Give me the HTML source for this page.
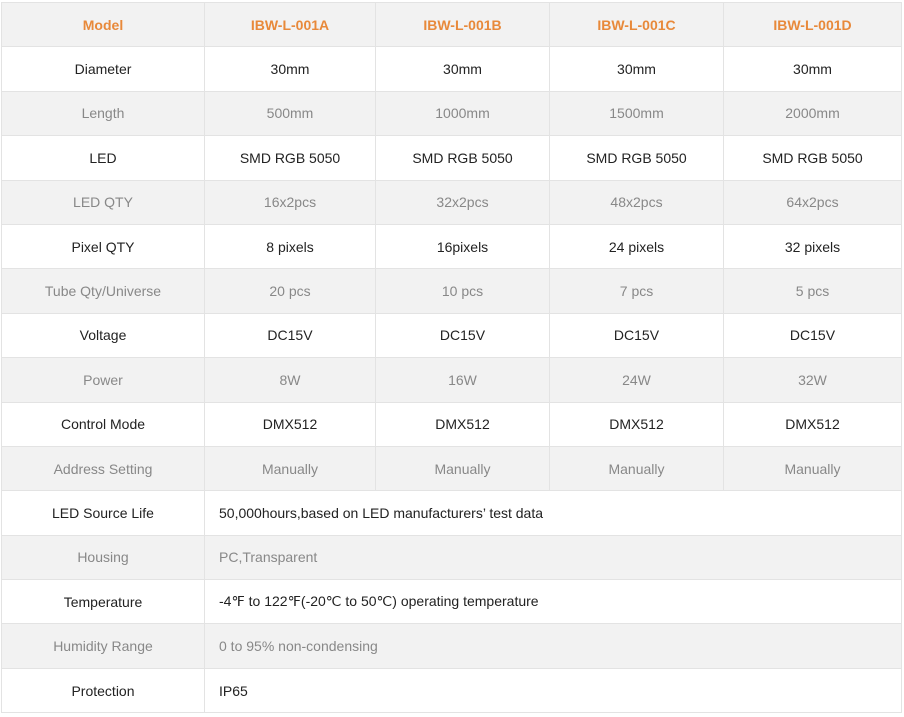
<!DOCTYPE html>
<html><head><meta charset="utf-8"><style>
html,body{margin:0;padding:0;background:#fff;width:904px;height:717px;overflow:hidden}
table{position:absolute;left:1px;top:2px;border-collapse:collapse;table-layout:fixed;width:900px;font-family:"Liberation Sans",sans-serif;font-size:14px}
td{border:1px solid #e3e3e3;text-align:center;padding:0;height:43.4px;color:#222}
tr:nth-child(odd) td{background:#f2f2f2;color:#888}
tr:first-child td{color:#e8893a;font-weight:bold}
td.l{text-align:left;padding-left:14px}
</style></head><body>
<table>
<colgroup><col style="width:203px"><col style="width:171px"><col style="width:174px"><col style="width:174px"><col style="width:178px"></colgroup>
<tr><td>Model</td><td>IBW-L-001A</td><td>IBW-L-001B</td><td>IBW-L-001C</td><td>IBW-L-001D</td></tr>
<tr><td>Diameter</td><td>30mm</td><td>30mm</td><td>30mm</td><td>30mm</td></tr>
<tr><td>Length</td><td>500mm</td><td>1000mm</td><td>1500mm</td><td>2000mm</td></tr>
<tr><td>LED</td><td>SMD RGB 5050</td><td>SMD RGB 5050</td><td>SMD RGB 5050</td><td>SMD RGB 5050</td></tr>
<tr><td>LED QTY</td><td>16x2pcs</td><td>32x2pcs</td><td>48x2pcs</td><td>64x2pcs</td></tr>
<tr><td>Pixel QTY</td><td>8 pixels</td><td>16pixels</td><td>24 pixels</td><td>32 pixels</td></tr>
<tr><td>Tube Qty/Universe</td><td>20 pcs</td><td>10 pcs</td><td>7 pcs</td><td>5 pcs</td></tr>
<tr><td>Voltage</td><td>DC15V</td><td>DC15V</td><td>DC15V</td><td>DC15V</td></tr>
<tr><td>Power</td><td>8W</td><td>16W</td><td>24W</td><td>32W</td></tr>
<tr><td>Control Mode</td><td>DMX512</td><td>DMX512</td><td>DMX512</td><td>DMX512</td></tr>
<tr><td>Address Setting</td><td>Manually</td><td>Manually</td><td>Manually</td><td>Manually</td></tr>
<tr><td>LED Source Life</td><td class="l" colspan="4">50,000hours,based on LED manufacturers’ test data</td></tr>
<tr><td>Housing</td><td class="l" colspan="4">PC,Transparent</td></tr>
<tr><td>Temperature</td><td class="l" colspan="4">-4℉ to 122℉(-20℃ to 50℃) operating temperature</td></tr>
<tr><td>Humidity Range</td><td class="l" colspan="4">0 to 95% non-condensing</td></tr>
<tr><td>Protection</td><td class="l" colspan="4">IP65</td></tr>
</table>
</body></html>
